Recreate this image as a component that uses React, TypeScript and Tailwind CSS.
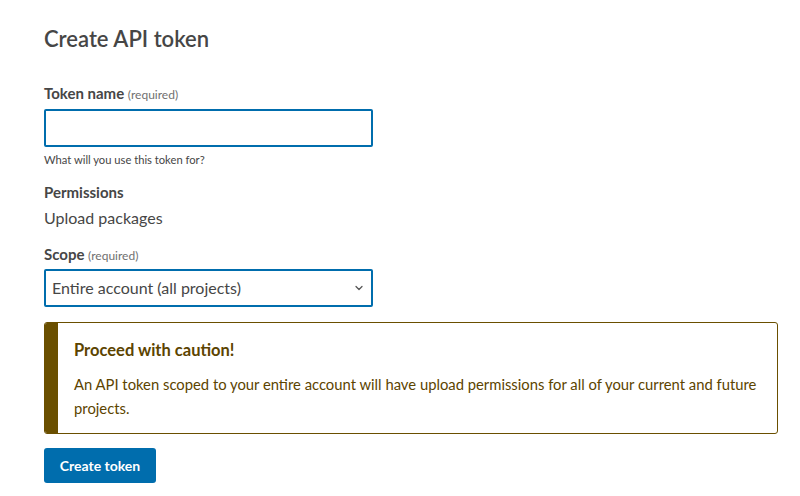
import { ChevronDown } from 'lucide-react'

export default function App() {
  return (
    <div className="min-h-[496px] w-[800px] bg-white px-[44px] pt-[26px] font-['Lato','Liberation_Sans',sans-serif] text-[#464646]">
      <h1 className="text-[22px] font-semibold leading-[26px] text-[#464646]">Create API token</h1>

      <form className="mt-[32px]" onSubmit={(e) => e.preventDefault()}>
        <label className="block text-[15px] font-bold leading-[18px]">
          Token name <span className="text-[12px] font-normal text-[#707070]">(required)</span>
        </label>
        <input
          type="text"
          className="mt-[5px] block h-[38px] w-[329px] rounded-[2px] border-2 border-[#006dad] bg-white px-2 outline-none"
        />
        <p className="mt-[6px] text-[11.2px] leading-[14px] text-[#464646]">What will you use this token for?</p>

        <div className="mt-[16px] text-[15px] font-bold leading-[18px]">Permissions</div>
        <div className="mt-[6px] text-[16px] leading-[22px]">Upload packages</div>

        <label className="mt-[16px] block text-[15px] font-bold leading-[18px]">
          Scope <span className="text-[12px] font-normal text-[#707070]">(required)</span>
        </label>
        <div className="relative mt-[4px] w-[329px]">
          <div className="flex h-[38px] items-center rounded-[2px] border-2 border-[#006dad] bg-white pl-[6px] text-[16px]">
            Entire account (all projects)
          </div>
          <ChevronDown className="absolute right-[8px] top-[13px] text-[#555]" size={12} strokeWidth={2.5} />
        </div>

        <div className="mt-[15px] flex w-[734px] overflow-hidden rounded-[3px] border border-[#6a4f00]">
          <div className="w-[13px] shrink-0 bg-[#6a4f00]" />
          <div className="pb-[13px] pl-[16px] pr-[6px] pt-[15px] text-[#5c4400]">
            <h3 className="text-[16.5px] font-bold leading-[24px]">Proceed with caution!</h3>
            <p className="mt-[10px] text-[14.8px] leading-[24px]">
              An API token scoped to your entire account will have upload permissions for all of your current and future
              projects.
            </p>
          </div>
        </div>

        <button
          type="submit"
          className="mt-[14px] h-[35px] w-[112px] rounded-[3px] bg-[#006dad] text-[14px] font-bold text-white"
        >
          Create token
        </button>
      </form>
    </div>
  )
}
